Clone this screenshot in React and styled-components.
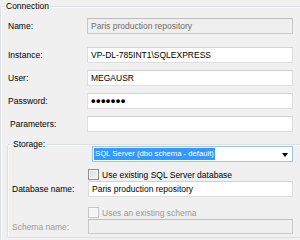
import React from 'react';
import styled, { createGlobalStyle } from 'styled-components';

const GlobalStyle = createGlobalStyle`
  html, body {
    margin: 0;
    padding: 0;
    background: #f0f0f0;
  }
  body {
    font-family: "Liberation Sans", Arial, sans-serif;
    font-size: 8.5px;
    color: #000;
  }
`;

const Page = styled.div`
  width: 300px;
  height: 240px;
  overflow: hidden;
`;

const Group = styled.div`
  position: relative;
  margin-top: ${(p) => p.$top}px;
  margin-left: ${(p) => p.$left}px;
  width: 330px;
  border: 1px solid #dcdfe3;
  border-radius: 2px;
  box-shadow: inset 1px 1px 0 #fafafa;
  padding: ${(p) => p.$pad};
  box-sizing: border-box;
  min-height: ${(p) => p.$minHeight}px;
`;

const GroupTitle = styled.span`
  position: absolute;
  top: -6px;
  left: ${(p) => p.$left}px;
  padding: 0 1px;
  line-height: 11px;
  background: #f0f0f0;
`;

const Row = styled.div`
  display: flex;
  align-items: center;
  height: ${(p) => p.$height || 16}px;
  margin-top: ${(p) => p.$mt || 0}px;
`;

const Label = styled.div`
  width: ${(p) => p.$width}px;
  padding-left: ${(p) => p.$indent || 0}px;
  box-sizing: border-box;
  color: ${(p) => (p.$disabled ? '#9a9a9a' : '#000')};
  white-space: nowrap;
`;

const Input = styled.div`
  width: ${(p) => p.$width || 206}px;
  height: ${(p) => p.$height || 16}px;
  box-sizing: border-box;
  border: 1px solid ${(p) => (p.$disabled ? '#c9c9c9' : '#dedede')};
  border-top-color: ${(p) => (p.$disabled ? '#bdbdbd' : '#d2d2d2')};
  background: ${(p) => (p.$disabled ? '#efefef' : '#fff')};
  color: ${(p) => (p.$disabled ? '#6d6d6d' : '#000')};
  padding-left: 3px;
  display: flex;
  align-items: center;
  white-space: nowrap;
  overflow: hidden;
`;

const Dots = styled.span`
  font-size: 13px;
  letter-spacing: 0.4px;
  font-weight: bold;
  line-height: 1;
  padding-bottom: 1px;
`;

const Select = styled.div`
  margin-left: 4px;
  width: 201px;
  height: 16px;
  box-sizing: border-box;
  border: 1px solid #9fc4ea;
  background: #fff;
  display: flex;
  align-items: center;
  justify-content: space-between;
  padding: 0 4px 0 1px;
`;

const Selected = styled.span`
  background: #3399ff;
  color: #fff;
  font-size: 7.7px;
  line-height: 12px;
  padding: 0 1px;
  white-space: nowrap;
`;

const Arrow = styled.span`
  width: 0;
  height: 0;
  border-left: 3px solid transparent;
  border-right: 3px solid transparent;
  border-top: 4px solid #000;
  margin-top: 1px;
`;

const Check = styled.label`
  display: flex;
  align-items: center;
  gap: 3px;
  color: ${(p) => (p.$disabled ? '#9a9a9a' : '#000')};
  white-space: nowrap;
`;

const Box = styled.span`
  width: 11px;
  height: 11px;
  box-sizing: border-box;
  border: 1px solid ${(p) => (p.$disabled ? '#c6c6c6' : '#8e8f8f')};
  background: ${(p) =>
    p.$disabled
      ? '#f4f4f4'
      : 'linear-gradient(135deg, #dcdcdc 0%, #f6f6f6 100%)'};
  box-shadow: inset 0 0 0 1px ${(p) => (p.$disabled ? '#f8f8f8' : '#f4f4f4')};
`;

const Spacer = styled.div`
  width: ${(p) => p.$width}px;
  flex-shrink: 0;
`;

function CheckRow({ mt, disabled, children }) {
  return (
    <Row $mt={mt} $height={11}>
      <Spacer $width={76} />
      <Check $disabled={disabled}>
        <Box $disabled={disabled} />
        {children}
      </Check>
    </Row>
  );
}

export default function App() {
  return (
    <Page>
      <GlobalStyle />
      <Group $top={6} $left={0} $pad="11px 0 0 7px" $minHeight={240}>
        <GroupTitle $left={4}>Connection</GroupTitle>

        <Row>
          <Label $width={79}>Name:</Label>
          <Input $disabled>Paris production repository</Input>
        </Row>
        <Row $mt={13}>
          <Label $width={79}>Instance:</Label>
          <Input>VP-DL-785INT1\SQLEXPRESS</Input>
        </Row>
        <Row $mt={7}>
          <Label $width={79}>User:</Label>
          <Input>MEGAUSR</Input>
        </Row>
        <Row $mt={7}>
          <Label $width={79}>Password:</Label>
          <Input>
            <Dots>•••••••</Dots>
          </Input>
        </Row>
        <Row $mt={7}>
          <Label $width={79} $indent={2}>Parameters:</Label>
          <Input />
        </Row>

        <Group $top={12} $left={-1} $pad="1px 0 0 4px" $minHeight={94}>
          <GroupTitle $left={4}>Storage:</GroupTitle>
          <Row>
            <Spacer $width={76} />
            <Select>
              <Selected>SQL Server (dbo schema - default)</Selected>
              <Arrow />
            </Select>
          </Row>
          <CheckRow mt={7}>Use existing SQL Server database</CheckRow>
          <Row $mt={1}>
            <Label $width={76}>Database name:</Label>
            <Input $width={205}>Paris production repository</Input>
          </Row>
          <CheckRow mt={10} disabled>
            Uses an existing schema
          </CheckRow>
          <Row $mt={1} $height={15}>
            <Label $width={76} $disabled>
              Schema name:
            </Label>
            <Input $width={205} $height={15} $disabled />
          </Row>
        </Group>
      </Group>
    </Page>
  );
}
